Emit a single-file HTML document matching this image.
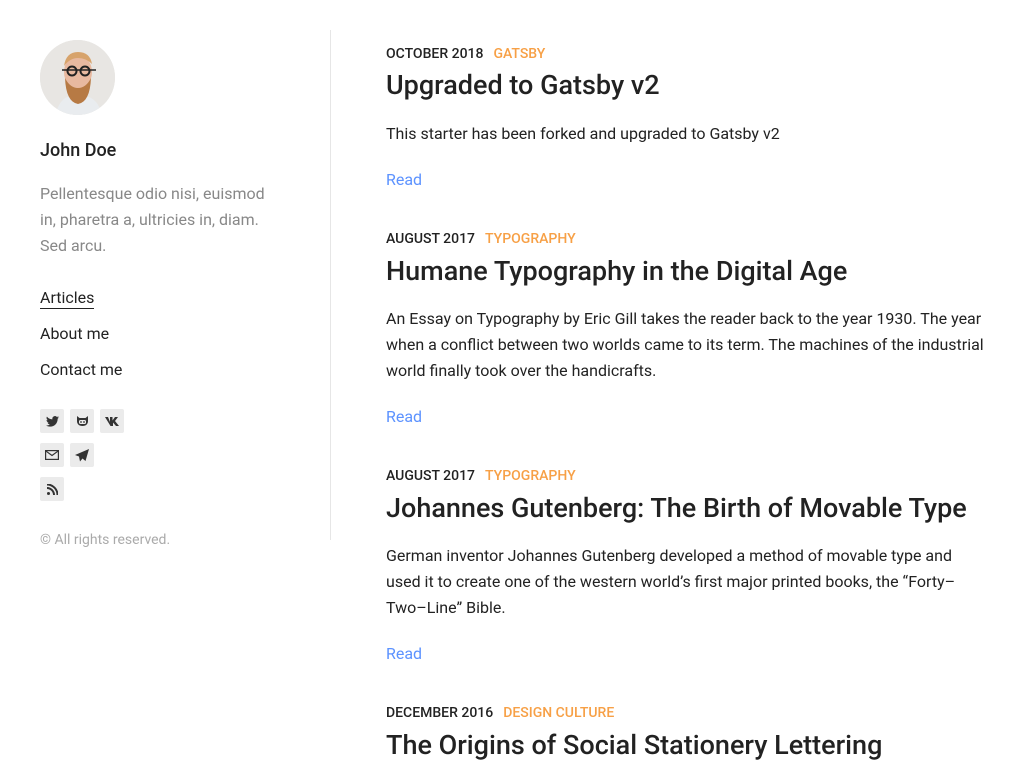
<!DOCTYPE html>
<html><head><meta charset="utf-8"><style>
*{margin:0;padding:0;box-sizing:border-box}
body{width:1024px;height:768px;overflow:hidden;background:#fff;font-family:"Roboto","Liberation Sans",sans-serif;color:#222;position:relative}
.a{position:absolute;white-space:nowrap}
.desc{color:#888;font-size:16px;line-height:26px}
.nav{font-size:16px;color:#222}
.ic{position:absolute;width:24px;height:24px;background:#ebebeb;border-radius:2px;display:flex;align-items:center;justify-content:center}
.meta{font-size:14px;color:#222;font-weight:500}
.meta b{font-weight:500;color:#f7a046;margin-left:10px}
.t{font-size:27px;color:#222;font-weight:500}
.p{font-size:16px;line-height:26px;color:#222}
.r{font-size:16px;color:#5d93ff}
</style></head><body>
<div class="a" style="left:40px;top:40px;width:75px;height:75px;border-radius:50%;overflow:hidden;background:#e6e4e2">
<svg width="75" height="75" viewBox="0 0 75 75">
<rect width="75" height="75" fill="#e8e6e3"/>
<path d="M15 75 Q20 58 30 56 L45 56 Q58 58 62 75Z" fill="#e9ecef"/>
<ellipse cx="38" cy="32" rx="14" ry="17" fill="#e8b9a0"/>
<path d="M24 26 Q26 12 38 12 Q50 12 52 24 Q46 18 38 18 Q30 18 24 26Z" fill="#d7a36b"/>
<path d="M25 38 Q26 62 38 64 Q50 62 51 38 Q46 48 38 48 Q30 48 25 38Z" fill="#b77a44"/>
<circle cx="32" cy="31" r="4.5" fill="none" stroke="#222" stroke-width="2"/>
<circle cx="45" cy="31" r="4.5" fill="none" stroke="#222" stroke-width="2"/>
<line x1="22" y1="30" x2="56" y2="30" stroke="#222" stroke-width="1.5"/>
</svg></div>
<div class="a" style="left:40px;top:140px;font-size:18px;font-weight:500">John Doe</div>
<div class="a desc" style="left:40px;top:181px">Pellentesque odio nisi, euismod<br>in, pharetra a, ultricies in, diam.<br>Sed arcu.</div>
<div class="a nav" style="left:40px;top:288px;border-bottom:1px solid #222;padding-bottom:1px">Articles</div>
<div class="a nav" style="left:40px;top:324px">About me</div>
<div class="a nav" style="left:40px;top:360px">Contact me</div>
<div class="ic" style="left:40px;top:409px"><svg width="13" height="11" viewBox="0 0 24 20"><path fill="#333" d="M24 2.4a10 10 0 0 1-2.8.8A5 5 0 0 0 23.3.4a9.8 9.8 0 0 1-3.1 1.2A4.9 4.9 0 0 0 11.8 6 14 14 0 0 1 1.7.9a4.9 4.9 0 0 0 1.5 6.6 4.9 4.9 0 0 1-2.2-.6 4.9 4.9 0 0 0 3.9 4.9 5 5 0 0 1-2.2.1 4.9 4.9 0 0 0 4.6 3.4A9.9 9.9 0 0 1 0 17.3 14 14 0 0 0 7.5 19.5c9 0 14-7.5 14-14v-.6A10 10 0 0 0 24 2.4z"/></svg></div>
<div class="ic" style="left:70px;top:409px"><svg width="13" height="12" viewBox="0 0 13 12"><path fill="#333" d="M1 1l2.5 2h6L12 1v5c0 3-2 5-5.5 5S1 9 1 6z"/><rect x="3" y="5" width="7" height="4" rx="1.5" fill="#ebebeb"/><circle cx="5" cy="7" r=".9" fill="#333"/><circle cx="8" cy="7" r=".9" fill="#333"/></svg></div>
<div class="ic" style="left:100px;top:409px"><svg width="15" height="9" viewBox="0 0 15 9"><path fill="#333" d="M0 0h3l2 5V0h2.5v3.5L10 0h3l-3 4 4 5h-3L8 5.5V9H5.5z"/></svg></div>
<div class="ic" style="left:40px;top:443px"><svg width="14" height="10" viewBox="0 0 14 10"><rect x=".6" y=".6" width="12.8" height="8.8" fill="none" stroke="#333" stroke-width="1.2"/><path d="M.6.8L7 5.5 13.4.8" fill="none" stroke="#333" stroke-width="1.2"/></svg></div>
<div class="ic" style="left:70px;top:443px"><svg width="14" height="13" viewBox="0 0 14 13"><path fill="#333" d="M14 0L0 6l4 1.5 1 5 2.5-3 3 2.5z"/></svg></div>
<div class="ic" style="left:40px;top:477px"><svg width="11" height="11" viewBox="0 0 11 11"><circle cx="1.5" cy="9.5" r="1.5" fill="#333"/><path d="M0 4a7 7 0 0 1 7 7M0 0.5a10.5 10.5 0 0 1 10.5 10.5" fill="none" stroke="#333" stroke-width="2"/></svg></div>
<div class="a" style="left:40px;top:532px;font-size:14px;color:#aaa">© All rights reserved.</div>
<div class="a" style="left:330px;top:30px;width:1px;height:510px;background:#e6e6e6"></div>

<div class="a meta" style="left:386px;top:46px">OCTOBER 2018<b>GATSBY</b></div>
<div class="a t" style="left:386px;top:69px">Upgraded to Gatsby v2</div>
<div class="a p" style="left:386px;top:121px">This starter has been forked and upgraded to Gatsby v2</div>
<div class="a r" style="left:386px;top:170px">Read</div>

<div class="a meta" style="left:386px;top:231px">AUGUST 2017<b>TYPOGRAPHY</b></div>
<div class="a t" style="left:386px;top:255px">Humane Typography in the Digital Age</div>
<div class="a p" style="left:386px;top:306px">An Essay on Typography by Eric Gill takes the reader back to the year 1930. The year<br>when a conflict between two worlds came to its term. The machines of the industrial<br>world finally took over the handicrafts.</div>
<div class="a r" style="left:386px;top:407px">Read</div>

<div class="a meta" style="left:386px;top:468px">AUGUST 2017<b>TYPOGRAPHY</b></div>
<div class="a t" style="left:386px;top:492px">Johannes Gutenberg: The Birth of Movable Type</div>
<div class="a p" style="left:386px;top:543px">German inventor Johannes Gutenberg developed a method of movable type and<br>used it to create one of the western world’s first major printed books, the “Forty–<br>Two–Line” Bible.</div>
<div class="a r" style="left:386px;top:644px">Read</div>

<div class="a meta" style="left:386px;top:705px">DECEMBER 2016<b>DESIGN CULTURE</b></div>
<div class="a t" style="left:386px;top:729px">The Origins of Social Stationery Lettering</div>
</body></html>
